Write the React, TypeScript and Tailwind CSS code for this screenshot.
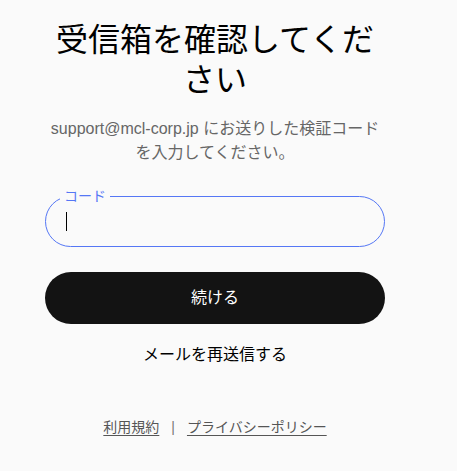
export default function App() {
  return (
    <div
      className="h-[471px] w-full bg-[#fafafa] text-black"
      style={{ fontFamily: '"Liberation Sans", "Noto Sans CJK JP", sans-serif' }}
    >
      <div className="flex w-[430px] flex-col items-center pt-[20px]">
        <div className="flex w-[340px] flex-col">
          <h1 className="text-center text-[32px] font-normal leading-[40px]">
            受信箱を確認してください
          </h1>
          <p className="mt-[17px] text-center text-[16px] leading-[24px] text-[#666666]">
            support@mcl-corp.jp にお送りした検証コードを入力してください。
          </p>

          <div className="relative mt-[31px] h-[51px] rounded-full border border-[#5577f5]">
            <span className="absolute -top-[10px] left-[14px] bg-[#fafafa] px-[4px] text-[14px] leading-[18px] text-[#5577f5]">
              コード
            </span>
            <div className="flex h-full items-center pl-[20px]">
              <span className="h-[19px] w-[1px] bg-black" />
            </div>
          </div>

          <button className="mt-[25px] flex h-[52px] items-center justify-center rounded-full bg-[#131313] text-[16px] text-white">
            続ける
          </button>

          <div className="mt-[19px] text-center text-[16px] leading-[24px]">
            メールを再送信する
          </div>

          <div className="mt-[50px] flex items-center justify-center gap-[12px] text-[14px] leading-[20px] text-[#555555]">
            <span className="underline underline-offset-[3px]">利用規約</span>
            <span className="text-[#777777]">|</span>
            <span className="underline underline-offset-[3px]">プライバシーポリシー</span>
          </div>
        </div>
      </div>
    </div>
  );
}
